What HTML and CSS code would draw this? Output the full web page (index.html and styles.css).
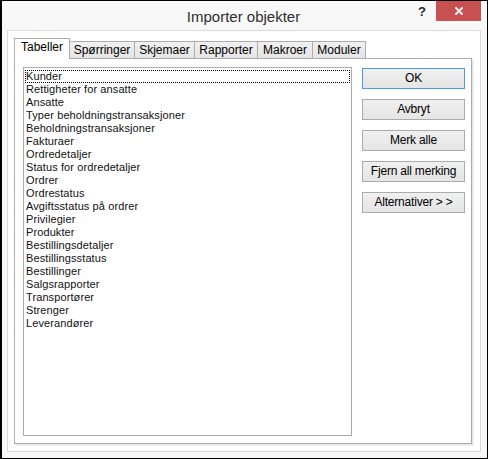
FILE: index.html
```html
<!DOCTYPE html>
<html lang="no">
<head>
<meta charset="utf-8">
<title>Importer objekter</title>
<link rel="stylesheet" href="styles.css">
</head>
<body>
<div class="window">
  <div class="titlebar">
    <div class="title">Importer objekter</div>
    <div class="help">?</div>
    <div class="close">
      <svg width="8" height="8" viewBox="0 0 8 8"><path d="M1 1 L7 7 M7 1 L1 7" stroke="#fff" stroke-width="1.8" stroke-linecap="square"/></svg>
    </div>
  </div>
  <div class="client">
    <div class="tabstrip">
      <div class="tab active w1">Tabeller</div>
      <div class="tab w2">Spørringer</div>
      <div class="tab w3">Skjemaer</div>
      <div class="tab w4">Rapporter</div>
      <div class="tab w5">Makroer</div>
      <div class="tab w6">Moduler</div>
    </div>
    <div class="panel">
      <div class="listbox">
        <div class="item focus">Kunder</div>
        <div class="item">Rettigheter for ansatte</div>
        <div class="item">Ansatte</div>
        <div class="item">Typer beholdningstransaksjoner</div>
        <div class="item">Beholdningstransaksjoner</div>
        <div class="item">Fakturaer</div>
        <div class="item">Ordredetaljer</div>
        <div class="item">Status for ordredetaljer</div>
        <div class="item">Ordrer</div>
        <div class="item">Ordrestatus</div>
        <div class="item">Avgiftsstatus på ordrer</div>
        <div class="item">Privilegier</div>
        <div class="item">Produkter</div>
        <div class="item">Bestillingsdetaljer</div>
        <div class="item">Bestillingsstatus</div>
        <div class="item">Bestillinger</div>
        <div class="item">Salgsrapporter</div>
        <div class="item">Transportører</div>
        <div class="item">Strenger</div>
        <div class="item">Leverandører</div>
      </div>
      <div class="buttons">
        <div class="btn default">OK</div>
        <div class="btn">Avbryt</div>
        <div class="btn">Merk alle</div>
        <div class="btn">Fjern all merking</div>
        <div class="btn">Alternativer &gt; &gt;</div>
      </div>
    </div>
  </div>
</div>
</body>
</html>
```
FILE: styles.css
```css
html, body {
  margin: 0;
  padding: 0;
  background: #f8f8f8;
}
.window {
  box-sizing: border-box;
  width: 488px;
  height: 459px;
  border: 1px solid #000;
  border-left-width: 2px;
  background: #f8f8f8;
  display: flex;
  flex-direction: column;
  font-family: "Liberation Sans", Arial, sans-serif;
}
.titlebar {
  height: 29px;
  position: relative;
  flex: none;
}
.title {
  text-align: center;
  font-size: 15px;
  line-height: 15px;
  padding-top: 8px;
  color: #2e2e2e;
  padding-right: 2px;
}
.help {
  position: absolute;
  left: 416px;
  top: 3px;
  font-size: 13px;
  font-weight: bold;
  color: #262626;
  line-height: 16px;
}
.close {
  position: absolute;
  left: 434px;
  top: 0;
  width: 45px;
  height: 20px;
  background: #c75050;
  display: flex;
  align-items: center;
  justify-content: center;
}
.close svg { display: block; }
.client {
  flex: none;
  margin: 0 6px 0 5px;
  height: 422px;
  box-sizing: border-box;
  border: 1px solid #dadada;
  background: #ffffff;
  padding: 7px 0 0 6px;
}
.tabstrip {
  display: flex;
  align-items: flex-end;
  height: 20px;
  position: relative;
  z-index: 1;
}
.tab {
  box-sizing: border-box;
  height: 17px;
  border: 1px solid #acacac;
  border-bottom: none;
  margin-left: -1px;
  background: linear-gradient(#f0f0f0, #e5e5e5);
  font-size: 12px;
  line-height: 16px;
  text-align: center;
  color: #000;
}
.tab.active {
  height: 21px;
  margin-bottom: -1px;
  margin-left: 0;
  background: #fff;
  line-height: 17px;
}
.w1 { width: 56px; }
.w2 { width: 66px; }
.w3 { width: 61px; }
.w4 { width: 64px; }
.w5 { width: 56px; }
.w6 { width: 54px; }
.panel {
  box-sizing: border-box;
  width: 458px;
  height: 386px;
  border: 1px solid #acacac;
  background: #fff;
  box-shadow: 1px 1px 0 #e6e6e6, 2px 2px 0 #f0f0f0;
  display: flex;
  padding: 8px 6px 7px 8px;
  gap: 10px;
}
.listbox {
  box-sizing: border-box;
  width: 329px;
  height: 369px;
  border: 1px solid #acacac;
  padding: 2px 1px 0 1px;
  font-size: 11px;
  line-height: 13px;
  color: #111;
  letter-spacing: 0.1px;
}
.item {
  height: 13px;
  padding-left: 1px;
  white-space: nowrap;
}
.item.focus {
  outline: 1px dotted #000;
  outline-offset: -1px;
}
.buttons {
  display: flex;
  flex-direction: column;
  gap: 10px;
  padding-top: 1px;
}
.btn {
  box-sizing: border-box;
  width: 103px;
  height: 21px;
  border: 1px solid #acacac;
  background: linear-gradient(#f0f0f0, #e5e5e5);
  font-size: 12px;
  letter-spacing: -0.2px;
  line-height: 19px;
  text-align: center;
  color: #000;
}
.btn.default {
  border-color: #4a98e6;
}
```
